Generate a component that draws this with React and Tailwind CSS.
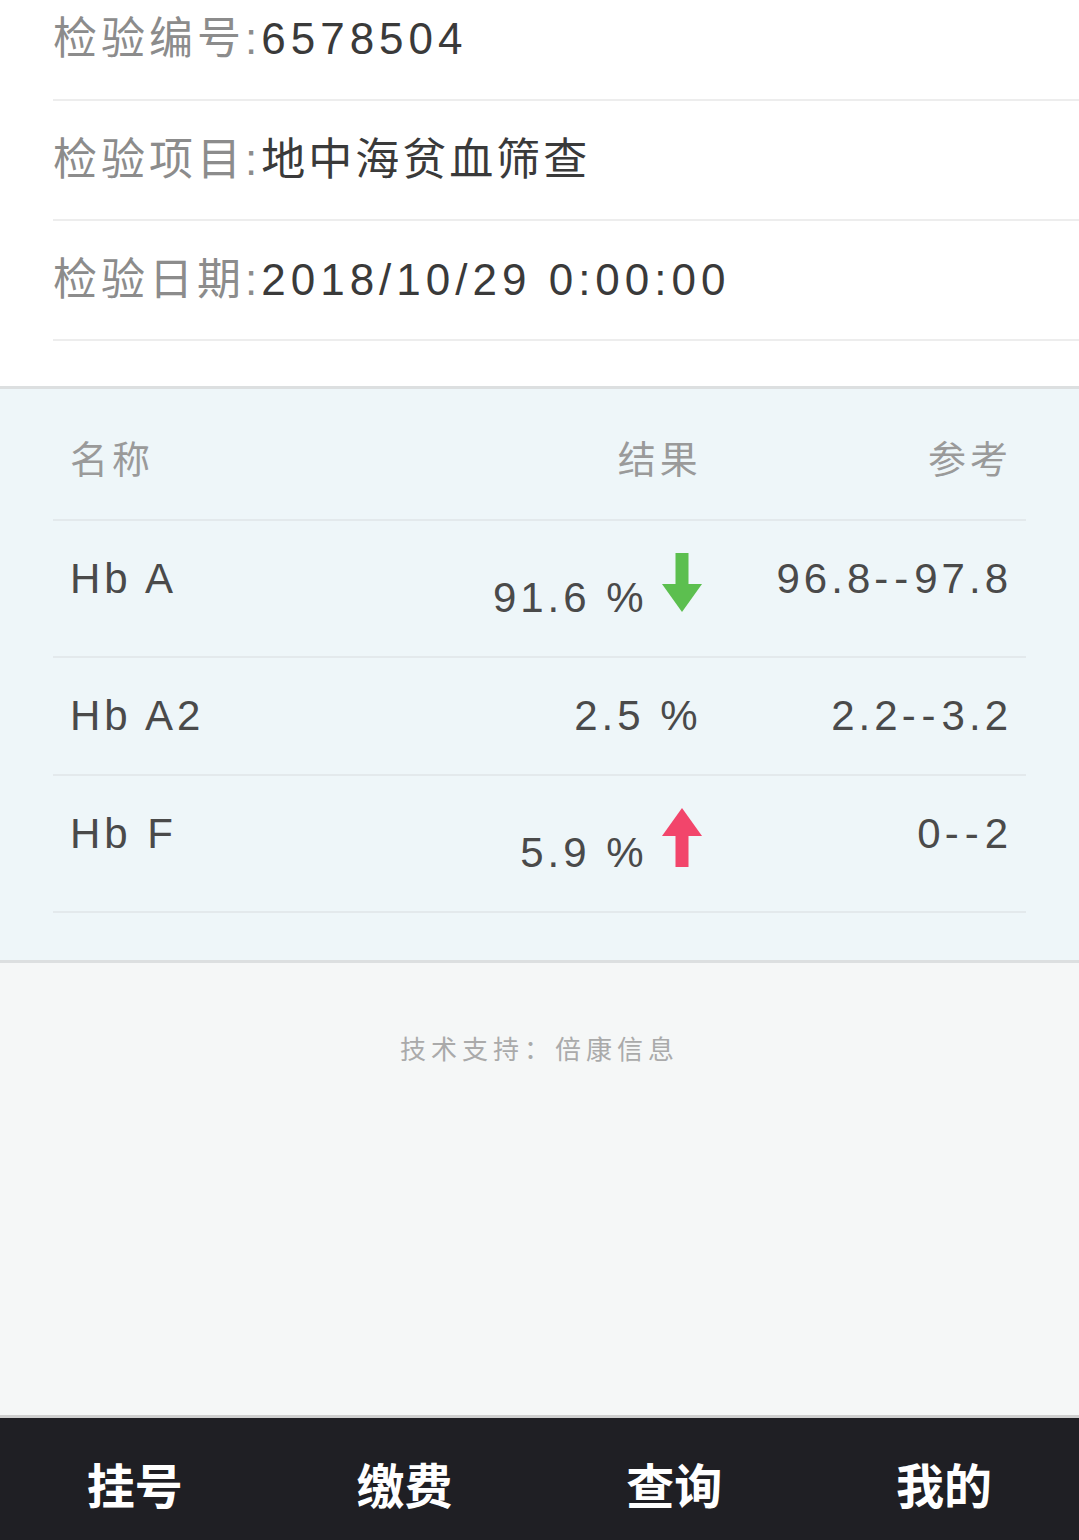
import React from 'react';

const infoRows = [
  { label: '检验编号:', value: '6578504', wide: true },
  { label: '检验项目:', value: '地中海贫血筛查', wide: false },
  { label: '检验日期:', value: '2018/10/29 0:00:00', wide: true },
];

const results = [
  { name: 'Hb A', value: '91.6 %', flag: 'down', range: ['96.8', '97.8'] },
  { name: 'Hb A2', value: '2.5 %', flag: null, range: ['2.2', '3.2'] },
  { name: 'Hb F', value: '5.9 %', flag: 'up', range: ['0', '2'] },
];

const tabs = ['挂号', '缴费', '查询', '我的'];

const ArrowDown = () => (
  <svg viewBox="0 0 40 59" width="40" height="59" className="inline-block align-baseline ml-[14px]">
    <rect x="13.5" y="0" width="13" height="32" fill="#5cbf4f" />
    <polygon points="0,31 40,31 20,59" fill="#5cbf4f" />
  </svg>
);

const ArrowUp = () => (
  <svg viewBox="0 0 40 59" width="40" height="59" className="inline-block align-baseline ml-[14px]">
    <polygon points="20,0 0,28 40,28" fill="#f2456b" />
    <rect x="13.5" y="27" width="13" height="32" fill="#f2456b" />
  </svg>
);

export default function App() {
  return (
    <div
      className="min-h-screen flex flex-col bg-white"
      style={{ fontFamily: '"Liberation Sans", "Noto Sans CJK SC", sans-serif' }}
    >
      {/* 基本信息 */}
      <div className="pl-[53px] pb-[45px]">
        {infoRows.map((row, i) => (
          <div
            key={row.label}
            className={`flex items-center border-b-2 border-[#ededed] text-[44px] leading-[50px] ${
              i === 0 ? 'h-[101px] pb-[22px]' : 'h-[120px]'
            }`}
          >
            <span className="text-[#8c8c8c] tracking-[4px]">{row.label}</span>
            <span className={`text-[#3a3a3a] ${row.wide ? 'tracking-[5px]' : 'tracking-[3px]'}`}>{row.value}</span>
          </div>
        ))}
      </div>

      {/* 结果表格 */}
      <div className="border-t-[3px] border-b-[3px] border-[#dcdfe0] bg-[#eef6f9] pb-[47px]">
        <div className="mx-[53px]">
          <div className="grid grid-cols-3 border-b-2 border-[#e3e9ec] pt-[46px] pb-[34px] text-[38px] leading-[50px] tracking-[4px] text-[#9a9a9a]">
            <div className="pl-[17px]">名称</div>
            <div className="text-right">结果</div>
            <div className="text-right pr-[14px]">参考</div>
          </div>
          {results.map((r) => (
            <div
              key={r.name}
              className="grid grid-cols-3 items-start border-b-2 border-[#e3e9ec] pt-[32px] pb-[32px] text-[42px] leading-[52px] tracking-[4px] text-[#4a4a4a]"
            >
              <div className="pl-[17px]">{r.name}</div>
              <div className="text-right whitespace-nowrap">
                {r.value}
                {r.flag === 'down' && <ArrowDown />}
                {r.flag === 'up' && <ArrowUp />}
              </div>
              <div className="text-right pr-[14px] whitespace-nowrap">
                {r.range[0]}
                <span className="tracking-[6px]">--</span>
                {r.range[1]}
              </div>
            </div>
          ))}
        </div>
      </div>

      {/* 页脚 */}
      <div className="flex-1 bg-[#f5f7f7] pt-[69px] text-center">
        <span className="text-[26px] leading-[36px] tracking-[5px] text-[#aaaaaa]">技术支持：倍康信息</span>
      </div>

      {/* 底部导航 */}
      <div className="border-t-[3px] border-[#cfcfcf] bg-[#1f1f24] h-[125px] grid grid-cols-4 items-start pt-[42px]">
        {tabs.map((t) => (
          <div key={t} className="text-center text-white font-bold text-[48px] leading-[56px]">
            {t}
          </div>
        ))}
      </div>
    </div>
  );
}
